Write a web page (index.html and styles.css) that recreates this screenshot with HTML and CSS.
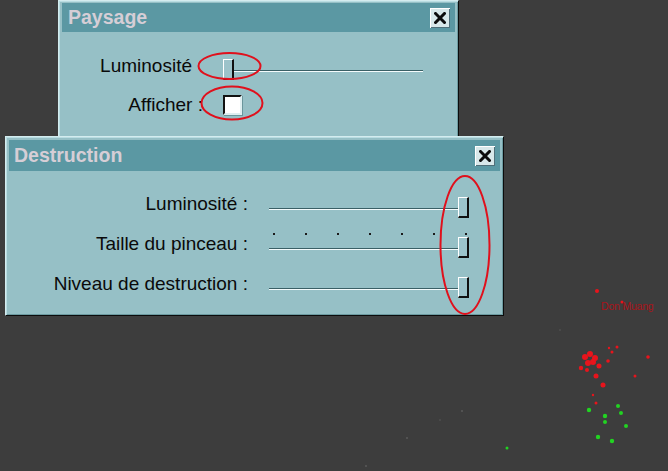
FILE: index.html
```html
<!DOCTYPE html>
<html lang="fr">
<head>
<meta charset="utf-8">
<title>Paysage / Destruction</title>
<link rel="stylesheet" href="styles.css">
</head>
<body>
<div class="desktop">
  <svg class="map" width="668" height="471" viewBox="0 0 668 471">
    <g fill="#5a5a5a">
      <circle cx="462" cy="411" r="1"/>
      <circle cx="407" cy="438" r="1"/>
      <circle cx="366" cy="466" r="1"/>
      <circle cx="440" cy="420" r="0.8"/>
      <circle cx="560" cy="330" r="0.8"/>
    </g>
    <g fill="#e8141c">
      <circle cx="597" cy="291" r="2"/>
      <circle cx="622" cy="302" r="1.5"/>
      <circle cx="585" cy="357" r="3"/>
      <circle cx="590" cy="354" r="3"/>
      <circle cx="595" cy="358" r="3"/>
      <circle cx="588" cy="363" r="3"/>
      <circle cx="593" cy="362" r="3"/>
      <circle cx="599" cy="366" r="2.5"/>
      <circle cx="581" cy="368" r="2.2"/>
      <circle cx="587" cy="370" r="2"/>
      <circle cx="596" cy="376" r="2.5"/>
      <circle cx="603" cy="385" r="2.5"/>
      <circle cx="608" cy="361" r="1.8"/>
      <circle cx="612" cy="352" r="1.5"/>
      <circle cx="617" cy="347" r="1.5"/>
      <circle cx="609" cy="348" r="1.2"/>
      <circle cx="648" cy="357" r="1.8"/>
      <circle cx="635" cy="376" r="1.5"/>
      <circle cx="593" cy="395" r="1.2"/>
      <circle cx="596" cy="403" r="1.5"/>
    </g>
    <g fill="#22d322">
      <circle cx="589" cy="410" r="2.2"/>
      <circle cx="618" cy="406" r="2"/>
      <circle cx="621" cy="413" r="2"/>
      <circle cx="605" cy="416" r="2.2"/>
      <circle cx="605" cy="422" r="2"/>
      <circle cx="626" cy="426" r="2"/>
      <circle cx="598" cy="437" r="2.2"/>
      <circle cx="612" cy="441" r="2.2"/>
      <circle cx="507" cy="448" r="1.5"/>
    </g>
  </svg>
  <div class="label-city">Don Muang</div>

  <section class="win win-paysage">
    <header class="titlebar">
      <h2 class="title">Paysage</h2>
      <button class="close" type="button" aria-label="Fermer">
        <svg width="12" height="12" viewBox="0 0 12 12"><path d="M1.5 1.5 L10.5 10.5 M10.5 1.5 L1.5 10.5" stroke="#0c0c0c" stroke-width="3" stroke-linecap="square"/></svg>
      </button>
    </header>
    <div class="body paysage-body">
      <div class="prow">
        <span class="plabel plabel-lum">Luminosité</span>
        <div class="slider slider-small">
          <span class="track"></span>
          <span class="thumb thumb-left"></span>
        </div>
      </div>
      <div class="prow">
        <span class="plabel">Afficher :</span>
        <span class="checkbox"></span>
      </div>
    </div>
  </section>

  <section class="win win-destruction">
    <header class="titlebar">
      <h2 class="title">Destruction</h2>
      <button class="close" type="button" aria-label="Fermer">
        <svg width="12" height="12" viewBox="0 0 12 12"><path d="M1.5 1.5 L10.5 10.5 M10.5 1.5 L1.5 10.5" stroke="#0c0c0c" stroke-width="3" stroke-linecap="square"/></svg>
      </button>
    </header>
    <div class="body destr-body">
      <div class="drow">
        <span class="dlabel">Luminosité :</span>
        <div class="slider slider-wide">
          <span class="track"></span>
          <span class="thumb thumb-right"></span>
        </div>
      </div>
      <div class="drow">
        <span class="dlabel">Taille du pinceau :</span>
        <div class="slider slider-wide">
          <div class="ticks"><i></i><i></i><i></i><i></i><i></i><i></i><i></i></div>
          <span class="track"></span>
          <span class="thumb thumb-right"></span>
        </div>
      </div>
      <div class="drow">
        <span class="dlabel">Niveau de destruction :</span>
        <div class="slider slider-wide">
          <span class="track"></span>
          <span class="thumb thumb-right"></span>
        </div>
      </div>
    </div>
  </section>

  <svg class="marks" width="668" height="471" viewBox="0 0 668 471">
    <g fill="none" stroke="#e0101c" stroke-width="2">
      <ellipse cx="229.5" cy="66" rx="31" ry="13"/>
      <ellipse cx="232" cy="103" rx="30.5" ry="16.5"/>
      <ellipse cx="465" cy="245" rx="24.5" ry="69"/>
    </g>
  </svg>
</div>
</body>
</html>
```
FILE: styles.css
```css
* { box-sizing: border-box; }
html, body { margin: 0; padding: 0; }
body {
  background: #3d3d3d;
  font-family: "Liberation Sans", Arial, sans-serif;
  width: 668px;
  height: 471px;
  overflow: hidden;
}
.desktop {
  position: relative;
  width: 668px;
  height: 471px;
}
.map, .marks {
  position: absolute;
  left: 0;
  top: 0;
}
.marks { z-index: 5; }
.label-city {
  position: absolute;
  left: 601px;
  top: 300px;
  font-size: 10.5px;
  color: #a8141a;
  letter-spacing: -0.2px;
}

.win {
  position: absolute;
  background: #96c0c6;
  border-top: 1px solid #d4ecef;
  border-left: 1px solid #d4ecef;
  border-right: 1px solid #0c0c0c;
  border-bottom: 1px solid #0c0c0c;
  padding: 2px 2px 0 2px;
  box-shadow: inset 1px 1px 0 #b9dde2, inset -1px -1px 0 #6c9aa0;
}
.win-paysage {
  left: 58px;
  top: 0;
  width: 401px;
  height: 150px;
  padding-top: 2px;
}
.win-destruction {
  left: 5px;
  top: 136px;
  width: 499px;
  height: 180px;
  padding-top: 3px;
  z-index: 2;
}
.titlebar {
  display: flex;
  align-items: center;
  justify-content: space-between;
  background: #5b98a3;
  height: 29px;
  padding: 0 5px 0 6px;
  margin: 0 1px;
}
.win-destruction .titlebar { height: 31px; padding: 0 5px 0 5px; }
.title {
  margin: 0;
  font-size: 19.5px;
  font-weight: bold;
  color: #d6ced6;
}
.close {
  display: flex;
  align-items: center;
  justify-content: center;
  width: 20px;
  height: 20px;
  padding: 0;
  border: none;
  background: #d8e8ea;
  box-shadow: inset 1px 1px 0 #ffffff, inset -1px -1px 0 #50707a;
}

.body { color: #0a0a0a; }

/* Paysage */
.paysage-body {
  padding: 14px 0 0 0;
  display: flex;
  flex-direction: column;
}
.prow {
  display: flex;
  align-items: center;
  height: 39px;
}
.plabel {
  width: 142px;
  text-align: right;
  font-size: 19px;
}
.plabel-lum { padding-right: 11px; }
.slider {
  position: relative;
  height: 40px;
}
.slider-small {
  width: 200px;
  margin-left: 20px;
}
.slider-small .track {
  position: absolute;
  left: 2px;
  right: 0;
  top: 24px;
  height: 2px;
  border-top: 1px solid #3a6066;
  border-bottom: 1px solid #f4fbfc;
}
.thumb {
  position: absolute;
  width: 11px;
  height: 21px;
  background: #9cc3ca;
  border-top: 1px solid #ffffff;
  border-left: 1px solid #ffffff;
  border-right: 2px solid #101010;
  border-bottom: 2px solid #101010;
}
.thumb-left { left: 0; top: 13px; }
.checkbox {
  display: block;
  width: 19px;
  height: 20px;
  margin-left: 20px;
  background: #ffffff;
  border-top: 2px solid #121212;
  border-left: 2px solid #121212;
  border-right: 2px solid #dfeff1;
  border-bottom: 2px solid #dfeff1;
  box-shadow: 1px 1px 0 #6a969c;
}

/* Destruction */
.destr-body {
  padding-top: 13px;
  display: flex;
  flex-direction: column;
}
.drow {
  display: flex;
  align-items: center;
  height: 40px;
}
.dlabel {
  width: 240px;
  text-align: right;
  font-size: 19px;
}
.slider-wide {
  width: 200px;
  margin-left: 21px;
}
.slider-wide .track {
  position: absolute;
  left: 0;
  right: 6px;
  top: 24px;
  height: 2px;
  border-top: 1px solid #3a6066;
  border-bottom: 1px solid #f4fbfc;
}
.thumb-right { right: 0; top: 13px; }
.ticks {
  position: absolute;
  left: 4px;
  top: 9px;
  display: flex;
  gap: 30px;
}
.ticks i {
  display: block;
  width: 2px;
  height: 2px;
  background: #1a1a1a;
}
```
